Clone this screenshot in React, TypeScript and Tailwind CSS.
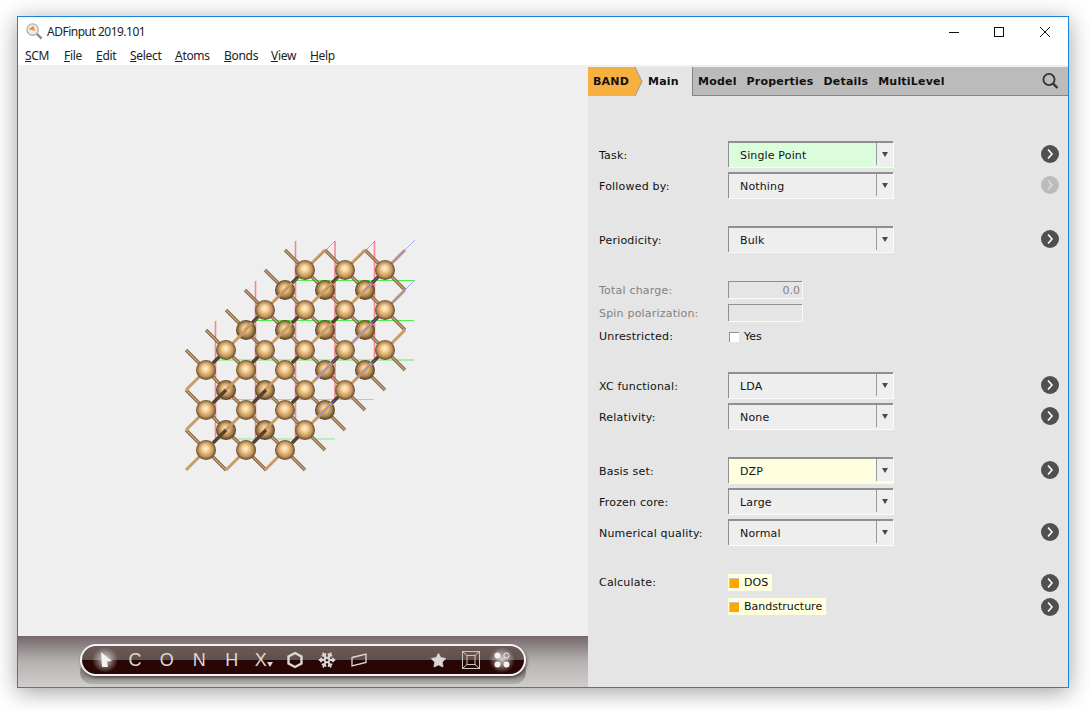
import React from "react";
import { Snowflake, Star } from "lucide-react";

const menus = [
  { first: "S", rest: "CM", w: "w-[39px]" },
  { first: "F", rest: "ile", w: "w-[32px]" },
  { first: "E", rest: "dit", w: "w-[34px]" },
  { first: "S", rest: "elect", w: "w-[45px]" },
  { first: "A", rest: "toms", w: "w-[49px]" },
  { first: "B", rest: "onds", w: "w-[47px]" },
  { first: "V", rest: "iew", w: "w-[39px]" },
  { first: "H", rest: "elp", w: "w-[30px]" },
];

// atom sites of the slab, [x, y]
const bright: number[][] = [
  [305, 270], [345, 270], [385, 270],
  [265, 310], [305, 310], [345, 310], [385, 310],
  [226, 350], [265, 350], [305, 350], [345, 350], [385, 350],
  [206, 370], [246, 370], [285, 370],
  [305, 390], [345, 390],
  [206, 410], [246, 410], [285, 410],
  [305, 430],
  [206, 450], [246, 450], [285, 450],
];
const dark: number[][] = [
  [285, 290], [325, 290], [365, 290],
  [246, 330], [285, 330], [325, 330], [365, 330],
  [325, 370], [365, 370],
  [226, 390], [265, 390],
  [325, 410],
  [226, 430], [265, 430],
];

interface Bond {
  x1: number;
  y1: number;
  x2: number;
  y2: number;
  rising: boolean;
}

// every atom is bonded along both diagonals, neighbours share a bond
const buildBonds = () => {
  const seen = new Set<string>();
  const bonds: Bond[] = [];
  [...bright, ...dark].forEach(([x, y]) => {
    [[-20, -20], [20, -20], [-20, 20], [20, 20]].forEach(([dx, dy]) => {
      const upper = dy < 0 ? [x + dx, y + dy] : [x, y];
      const lower = dy < 0 ? [x, y] : [x + dx, y + dy];
      const key = `${Math.round(upper[0] / 20)}:${upper[1]}:${Math.round(lower[0] / 20)}`;
      if (seen.has(key)) return;
      seen.add(key);
      bonds.push({
        x1: upper[0],
        y1: upper[1],
        x2: lower[0],
        y2: lower[1],
        rising: lower[0] < upper[0],
      });
    });
  });
  return bonds;
};

const Molecule = () => {
  const bonds = buildBonds();
  return (
    <svg viewBox="18 65 570 571" className="block w-[570px] h-[571px]">
      <defs>
        <radialGradient id="lit" cx="50%" cy="50%" r="52%" fx="47%" fy="40%">
          <stop offset="0%" stopColor="#fff3dc" />
          <stop offset="32%" stopColor="#f6cf95" />
          <stop offset="70%" stopColor="#c39458" />
          <stop offset="100%" stopColor="#4d3b28" />
        </radialGradient>
        <radialGradient id="shade" cx="50%" cy="50%" r="52%" fx="47%" fy="38%">
          <stop offset="0%" stopColor="#fbe0b0" />
          <stop offset="40%" stopColor="#dfb47c" />
          <stop offset="75%" stopColor="#99733f" />
          <stop offset="100%" stopColor="#3d2e1f" />
        </radialGradient>
      </defs>
      <g stroke="#f58791" strokeWidth="1.6">
        <line x1="215.5" y1="321" x2="215.5" y2="438" />
        <line x1="255.5" y1="281" x2="255.5" y2="438" />
        <line x1="295.5" y1="241" x2="295.5" y2="438" />
        <line x1="335" y1="241" x2="335" y2="398" />
        <line x1="374.5" y1="241" x2="374.5" y2="358" />
      </g>
      <g strokeWidth="1.2">
        <line x1="295" y1="280.5" x2="414" y2="280.5" stroke="#4cf04c" />
        <line x1="255" y1="320.5" x2="414" y2="320.5" stroke="#4cf04c" />
        <line x1="215" y1="360" x2="414" y2="360" stroke="#5cf05c" />
        <line x1="215" y1="399.5" x2="374" y2="399.5" stroke="#8eea8e" />
        <line x1="215" y1="439" x2="335" y2="439" stroke="#8eea8e" />
      </g>
      {bonds
        .filter((b) => !b.rising)
        .map((b) => (
          <g key={`f${b.x1}-${b.y1}`}>
            <line x1={b.x1} y1={b.y1} x2={b.x2} y2={b.y2} stroke="#7d6040" strokeWidth="3.2" />
            <line x1={b.x1} y1={b.y1} x2={b.x2} y2={b.y2} stroke="#cda676" strokeWidth="1.2" />
          </g>
        ))}
      {dark.map(([x, y]) => (
        <circle key={`d${x}-${y}`} cx={x} cy={y} r="10" fill="url(#shade)" />
      ))}
      {bonds
        .filter((b) => b.rising)
        .map((b) => (
          <g key={`r${b.x1}-${b.y1}`}>
            <line x1={b.x1} y1={b.y1} x2={b.x2} y2={b.y2} stroke="#c89c64" strokeWidth="3" />
            {(b.y1 + 10) % 40 === 0 && (
              <line
                x1={b.x1}
                y1={b.y1}
                x2={b.x1 - 13}
                y2={b.y1 + 13}
                stroke="#59412d"
                strokeWidth="3.4"
              />
            )}
          </g>
        ))}
      <g stroke="#7a7af5" strokeWidth="0.8" opacity="0.75">
        <line x1="415" y1="240" x2="365" y2="290" />
        <line x1="375" y1="241" x2="325" y2="291" />
        <line x1="335" y1="241" x2="246" y2="330" />
        <line x1="415" y1="280" x2="365" y2="330" />
        <line x1="375" y1="320" x2="315" y2="380" />
        <line x1="375" y1="360" x2="355" y2="380" />
        <line x1="335" y1="400" x2="318" y2="417" />
        <line x1="335" y1="360" x2="318" y2="377" />
      </g>
      {bright.map(([x, y]) => (
        <circle key={`b${x}-${y}`} cx={x} cy={y} r="10" fill="url(#lit)" />
      ))}
    </svg>
  );
};

const RoundArrow = ({ off = false }: { off?: boolean }) => (
  <svg viewBox="0 0 18 18" className="ml-auto w-[18px] h-[18px] shrink-0">
    <circle cx="9" cy="9" r="9" fill={off ? "#bcbcbc" : "#505050"} />
    <path
      d="M7 4.5 L11 9 L7 13.5"
      fill="none"
      stroke={off ? "#dcdcdc" : "#ffffff"}
      strokeWidth="1.6"
    />
  </svg>
);

const Combo = ({ value, fill = "bg-[#eeeeee]" }: { value: string; fill?: string }) => (
  <div
    className={`flex w-[165px] h-[26px] border-t-2 border-l border-[#8f8f8f] border-r-0 border-b-0 ${fill} shadow-[1px_1px_0_#fbfbfb]`}
  >
    <span className="flex-1 pl-[11px] leading-[25px] tracking-[0.15px]">{value}</span>
    <span className="flex items-center justify-center w-[17px] h-[22px] mb-[1px] border-l border-[#9a9a9a] bg-[#efefef]">
      <span className="w-0 h-0 border-x-[3.5px] border-x-transparent border-t-[5px] border-t-[#4a4a4a]" />
    </span>
  </div>
);

const Label = ({ children, pt = "pt-[4px]" }: { children?: React.ReactNode; pt?: string }) => (
  <span className={`w-[129px] shrink-0 tracking-[0.2px] ${pt}`}>{children}</span>
);

const ComboRow = ({
  label,
  value,
  fill,
  more = true,
  mt = "",
  off = false,
}: {
  label: string;
  value: string;
  fill?: string;
  more?: boolean;
  mt?: string;
  off?: boolean;
}) => (
  <div className={`flex items-center h-[26px] ${mt}`}>
    <Label>{label}</Label>
    <Combo value={value} fill={fill} />
    {more && <RoundArrow off={off} />}
  </div>
);

const FieldRow = ({ label, value, mt }: { label: string; value?: string; mt: string }) => (
  <div className={`flex items-center h-[17px] text-[#828282] ${mt}`}>
    <Label>{label}</Label>
    <span className="w-[74px] h-[17px] px-[2px] text-right leading-[17px] border-t border-l border-[#8f8f8f] shadow-[1px_1px_0_#fbfbfb]">
      {value}
    </span>
  </div>
);

const CalcItem = ({ text, w }: { text: string; w: string }) => (
  <span className={`flex items-center h-[17px] bg-[#ffffe0] ${w}`}>
    <span className="ml-[1px] mr-[5px] w-[10px] h-[10px] bg-[#ffa500] border-t border-l border-[#c8c8c8]" />
    <span className="pt-[2px]">{text}</span>
  </span>
);

const Letter = ({ children, w }: { children: React.ReactNode; w: string }) => (
  <span className={`flex items-center justify-center h-full ${w}`}>{children}</span>
);

const Toolbar = () => (
  <div className="flex h-[51px] pt-[8px] pl-[62px] flex-col bg-gradient-to-b from-[#75686a] via-[#b6b2b1] via-50% to-[#cfcdcc] overflow-hidden">
    <div className="relative z-10 flex w-[446px] h-[32px] shrink-0 rounded-full border-2 border-[#f4f2f2] bg-gradient-to-b from-[#6b5a56] from-0% via-[#60504d] via-50% to-[#280604] to-50% shadow-[1px_2px_3px_rgba(40,30,30,0.6)] text-[#dcd8d6] text-[18px] leading-none font-['Liberation_Sans',sans-serif]">
      <div className="flex items-center pl-[8.5px]">
        <Letter w="w-[29px]">
          <svg viewBox="0 0 28 28" className="w-[28px] h-[28px] shrink-0">
            <defs>
              <radialGradient id="glow">
                <stop offset="0%" stopColor="#ffffff" stopOpacity="0.75" />
                <stop offset="60%" stopColor="#ffffff" stopOpacity="0.3" />
                <stop offset="100%" stopColor="#ffffff" stopOpacity="0" />
              </radialGradient>
            </defs>
            <circle cx="14" cy="14" r="13" fill="url(#glow)" />
            <polygon points="10,6 21,15 16,15.5 17,21 11,21" fill="#f4f2f2" />
          </svg>
        </Letter>
        <Letter w="w-[31px]">C</Letter>
        <Letter w="w-[32.5px]">O</Letter>
        <Letter w="w-[32.5px]">N</Letter>
        <Letter w="w-[32.5px]">H</Letter>
        <Letter w="w-[31.5px]">
          X
          <span className="mt-[8px] w-0 h-0 border-x-[3.5px] border-x-transparent border-t-[5px] border-t-[#dcd8d6]" />
        </Letter>
        <Letter w="w-[31.5px]">
          <svg viewBox="0 0 18 18" className="w-[18px] h-[18px]">
            <polygon points="9,2 15.5,5.5 15.5,12.5 9,16 2.5,12.5 2.5,5.5" fill="none" stroke="#dcd8d6" strokeWidth="2.4" />
          </svg>
        </Letter>
        <Letter w="w-[32px]">
          <Snowflake size={18} strokeWidth={2.4} />
        </Letter>
        <Letter w="w-[32px]">
          <svg viewBox="0 0 18 14" className="w-[18px] h-[14px]">
            <polygon points="2,4.5 16,1 16,9.5 2,13" fill="none" stroke="#dcd8d6" strokeWidth="1.3" />
          </svg>
        </Letter>
      </div>
      <div className="flex items-center ml-auto pr-[7px]">
        <Letter w="w-[34px]">
          <Star size={17} fill="#dcd8d6" strokeWidth={1} />
        </Letter>
        <Letter w="w-[32px]">
          <svg viewBox="0 0 18 18" className="w-[18px] h-[18px]">
            <g fill="none" stroke="#c8c4c2" strokeWidth="1">
              <rect x="0.5" y="0.5" width="17" height="17" />
              <rect x="5" y="4.5" width="8" height="9" />
              <path d="M0.5 0.5 L5 4.5 M17.5 0.5 L13 4.5 M0.5 17.5 L5 13.5 M17.5 17.5 L13 13.5" />
            </g>
          </svg>
        </Letter>
        <Letter w="w-[30px]">
          <svg viewBox="0 0 28 28" className="w-[28px] h-[28px] shrink-0">
            <circle cx="14" cy="14" r="13" fill="url(#glow)" />
            <circle cx="9.5" cy="9.5" r="3" fill="#f4f2f2" />
            <circle cx="18.5" cy="9.5" r="2.6" fill="none" stroke="#f4f2f2" strokeWidth="1" />
            <circle cx="9.5" cy="18.5" r="3" fill="#f4f2f2" />
            <circle cx="18.5" cy="18.5" r="3" fill="#f4f2f2" />
          </svg>
        </Letter>
      </div>
    </div>
    <div className="w-[446px] h-[24px] -mt-[16px] rounded-[16px] bg-gradient-to-b from-[#7c7878] via-[#8e8a8a] via-65% to-[#b4b1b1]" />
  </div>
);

const App: React.FC = () => {
  return (
    <div className="w-[1090px] h-[710px] bg-white pl-[17px] pt-[16px] overflow-hidden">
      <div className="flex flex-col w-[1052px] h-[672px] bg-white border border-[#1b84d8] shadow-[0_4px_22px_rgba(0,0,0,0.38)] text-[#111111] font-['Noto_Sans',sans-serif]">
        <div className="flex items-center h-[29px] shrink-0">
          <svg viewBox="0 0 18 18" className="ml-[8px] w-[17px] h-[17px]">
            <circle cx="7" cy="7" r="6" fill="#ececec" stroke="#b4aeaa" strokeWidth="1.4" />
            <path d="M2.5 6.5 L8 3 L9.5 8.5 L6.5 7.5 Z" fill="#f0923a" />
            <path d="M11.5 11.5 L16.5 16.5" stroke="#8b8b8b" strokeWidth="2.4" />
          </svg>
          <span className="ml-[4px] text-[12px] tracking-[-0.5px] text-[#222222]">ADFinput 2019.101</span>
          <div className="flex items-center ml-auto">
            <svg viewBox="0 0 120 14" className="w-[120px] h-[14px] mr-[17px]" fill="none" stroke="#111111" strokeWidth="1">
              <path d="M18 7.5 H28" />
              <rect x="63.5" y="2.5" width="9" height="9" />
              <path d="M109 2 L119 12 M119 2 L109 12" />
            </svg>
          </div>
        </div>
        <div className="flex items-center h-[19px] shrink-0 pl-[7px] pt-[1px] text-[12px] tracking-[-0.3px] text-[#222222]">
          {menus.map((m) => (
            <span key={m.first + m.rest} className={m.w}>
              <span className="underline">{m.first}</span>
              {m.rest}
            </span>
          ))}
        </div>
        <div className="flex flex-1 min-h-0">
          <div className="flex flex-col w-[570px] shrink-0 bg-[#efefef]">
            <div className="h-[571px] shrink-0">
              <Molecule />
            </div>
            <Toolbar />
          </div>
          <div className="flex flex-col flex-1 bg-[#e5e5e5] text-[11px] font-['DejaVu_Sans',sans-serif]">
            <div className="h-[2px] shrink-0 bg-[#efefef]" />
            <div className="flex h-[29px] shrink-0 font-bold tracking-[0.2px]">
              <div className="relative w-[55px] h-[29px] shrink-0 bg-[#e5e5e5]">
                <svg viewBox="0 0 55 29" className="absolute inset-0 w-[55px] h-[29px]">
                  <polygon points="0,0 47,0 54,14.5 47,29 0,29" fill="#f7b03f" />
                  <polyline points="47,0 54,14.5 47,29" fill="none" stroke="#9a9a9a" strokeWidth="1" />
                </svg>
                <span className="absolute left-[5px] top-[7px]">BAND</span>
              </div>
              <div className="w-[50px] h-[29px] shrink-0 pl-[5px] pt-[7px] bg-[#e5e5e5] border-r border-[#858585]">Main</div>
              <div className="flex flex-1 bg-[#bbbbbb] border-b border-[#858585]">
                <div className="flex gap-[10px] pl-[5px] pt-[7px]">
                  <span>Model</span>
                  <span>Properties</span>
                  <span>Details</span>
                  <span>MultiLevel</span>
                </div>
                <svg viewBox="0 0 18 18" className="ml-auto mr-[9px] mt-[5px] w-[18px] h-[18px]" fill="none" stroke="#333333">
                  <circle cx="8" cy="7.5" r="5.6" strokeWidth="1.8" />
                  <path d="M12 11.5 L16.5 16" strokeWidth="2.4" />
                </svg>
              </div>
            </div>
            <div className="flex flex-col pl-[11px] pr-[9px] pt-[45px]">
              <ComboRow label="Task:" value="Single Point" fill="bg-[#dcfddc]" />
              <ComboRow label="Followed by:" value="Nothing" mt="mt-[5px]" off />
              <ComboRow label="Periodicity:" value="Bulk" mt="mt-[28px]" />
              <FieldRow label="Total charge:" value="0.0" mt="mt-[29px]" />
              <FieldRow label="Spin polarization:" mt="mt-[6px]" />
              <div className="flex items-center h-[17px] mt-[7px]">
                <Label pt="pt-[2px]">Unrestricted:</Label>
                <span className="ml-[1px] mr-[5px] w-[10px] h-[10px] bg-white border-t border-l border-[#8f8f8f]" />
                <span className="pt-[2px]">Yes</span>
              </div>
              <ComboRow label="XC functional:" value="LDA" mt="mt-[27px]" />
              <ComboRow label="Relativity:" value="None" mt="mt-[5px]" />
              <ComboRow label="Basis set:" value="DZP" fill="bg-[#ffffe0]" mt="mt-[28px]" />
              <ComboRow label="Frozen core:" value="Large" mt="mt-[5px]" more={false} />
              <ComboRow label="Numerical quality:" value="Normal" mt="mt-[5px]" />
              <div className="flex items-center h-[17px] mt-[29px]">
                <Label pt="pt-[2px]">Calculate:</Label>
                <CalcItem text="DOS" w="w-[44px]" />
                <RoundArrow />
              </div>
              <div className="flex items-center h-[17px] mt-[7px]">
                <Label />
                <CalcItem text="Bandstructure" w="w-[98px]" />
                <RoundArrow />
              </div>
            </div>
          </div>
        </div>
      </div>
    </div>
  );
};

export default App;
